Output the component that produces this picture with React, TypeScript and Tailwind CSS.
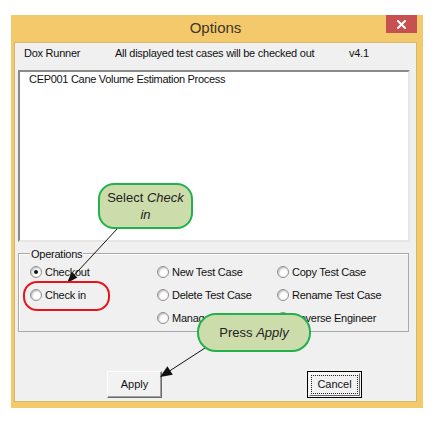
import React from "react";

function Radio({ label, checked }: { label?: string; checked?: boolean }) {
  if (!label) return <div />;
  return (
    <div className="flex items-center gap-[3px]">
      <div className="w-[12px] h-[12px] rounded-full border border-[#8e8e8e] bg-white shadow-[inset_1px_1px_2px_rgba(0,0,0,0.3)] flex items-center justify-center">
        {checked && <div className="w-[4px] h-[4px] rounded-full bg-[#111]" />}
      </div>
      <span className="text-[11px] leading-[14px] tracking-[-0.25px] text-[#111]">{label}</span>
    </div>
  );
}

export default function App() {
  return (
    <div
      className="relative w-[435px] h-[427px] bg-white overflow-hidden"
      style={{ fontFamily: '"Liberation Sans", Arial, sans-serif' }}
    >
      {/* window */}
      <div className="ml-[11px] mt-[15px] w-[412px] h-[393px] bg-[#f3c96b] flex flex-col pl-[3px] pr-[6px] pb-[6px]">
        {/* title bar */}
        <div className="h-[27px] grid grid-cols-[1fr_auto_1fr]">
          <div />
          <div className="flex items-center text-[15px] text-[#3d3629] pb-[1px]">Options</div>
          <div className="flex justify-end items-start">
            <div className="w-[31px] h-[18px] bg-[#c75050] flex items-center justify-center">
              <svg width="9" height="9" viewBox="0 0 9 9">
                <path d="M1 1 L8 8 M8 1 L1 8" stroke="white" strokeWidth="2" strokeLinecap="square" />
              </svg>
            </div>
          </div>
        </div>
        {/* client */}
        <div className="flex-1 bg-[#f0f0f0] border border-[#d6b869] flex flex-col">
          {/* header row */}
          <div className="h-[21px] flex items-center pl-[9px] text-[11px] tracking-[-0.25px] text-[#111]">
            <span className="w-[91px]">Dox Runner</span>
            <span className="w-[234px]">All displayed test cases will be checked out</span>
            <span>v4.1</span>
          </div>
          {/* listbox */}
          <div className="mt-[6px] ml-[3px] w-[392px] h-[172px] bg-white border-2 border-t-[#8a8a8a] border-l-[#8a8a8a] border-b-[#e6e6e6] border-r-[#e6e6e6] pl-[9px]">
            <div className="text-[11px] leading-[14px] tracking-[-0.3px] text-[#111]">CEP001 Cane Volume Estimation Process</div>
          </div>
          {/* group box */}
          <div className="mt-[11px] ml-[3px] w-[391px] h-[79px] border border-[#a9a9a9] shadow-[inset_1px_1px_0_white]">
            <div className="ml-[11px] -mt-[7px] px-[1px] w-fit h-[14px] leading-[14px] bg-[#f0f0f0] text-[11px] tracking-[-0.25px] text-[#111]">
              Operations
            </div>
            <div className="grid grid-cols-[127px_120px_1fr] grid-rows-[22px_24px_22px] items-center pl-[11px]">
              <Radio label="Checkout" checked />
              <Radio label="New Test Case" />
              <Radio label="Copy Test Case" />
              <Radio label="Check in" />
              <Radio label="Delete Test Case" />
              <Radio label="Rename Test Case" />
              <div />
              <Radio label="Manage Test Cases" />
              <Radio label="Reverse Engineer" />
            </div>
          </div>
          {/* buttons */}
          <div className="mt-[39px] flex pl-[92px] gap-[145px]">
            <div className="w-[55px] h-[27px] bg-[#f2f2f2] border border-t-[#fdfdfd] border-l-[#fdfdfd] border-b-[#6b6b6b] border-r-[#6b6b6b] shadow-[inset_-1px_-1px_0_#a0a0a0] flex items-center justify-center text-[11px] text-[#111]">
              Apply
            </div>
            <div className="w-[55px] h-[27px] border border-black p-[1px] bg-[#f2f2f2]">
              <div className="w-full h-full border border-t-[#fdfdfd] border-l-[#fdfdfd] border-b-[#6b6b6b] border-r-[#6b6b6b] p-[1px]">
                <div className="w-full h-full border border-dotted border-[#222] flex items-center justify-center text-[11px] text-[#111]">
                  Cancel
                </div>
              </div>
            </div>
          </div>
        </div>
      </div>

      {/* annotation arrows */}
      <svg className="absolute left-0 top-0 pointer-events-none" width="435" height="427">
        <line x1="117" y1="229" x2="72" y2="277.5" stroke="#111" strokeWidth="1" />
        <polygon points="67,283 77.4,277.6 71.6,272.2" fill="#111" />
        <line x1="205" y1="348" x2="168" y2="372" stroke="#111" strokeWidth="1" />
        <polygon points="160,377 172.8,374.7 167.4,366.3" fill="#111" />
      </svg>

      {/* red highlight */}
      <div className="absolute left-[23px] top-[281px] w-[87px] h-[30px] rounded-[14px] border-[2.5px] border-[#e8141b]" />

      {/* callout 1 */}
      <div className="absolute left-[98px] top-[183px] w-[95px] h-[46px] rounded-[16px] border-2 border-[#22b14c] bg-[#cddcab] flex flex-col items-center justify-center text-[13px] leading-[17px] text-[#222]">
        <div>
          Select <i>Check</i>
        </div>
        <div>
          <i>in</i>
        </div>
      </div>

      {/* callout 2 */}
      <div className="absolute left-[197px] top-[313px] w-[114px] h-[39px] rounded-[19px] border-2 border-[#22b14c] bg-[#cddcab] flex items-center justify-center text-[13px] leading-[17px] text-[#222]">
        <span>
          Press <i>Apply</i>
        </span>
      </div>
    </div>
  );
}
